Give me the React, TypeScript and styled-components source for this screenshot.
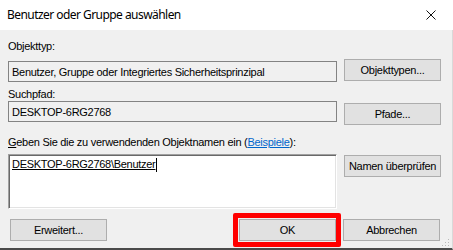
import * as React from "react";
import styled, { createGlobalStyle } from "styled-components";

const GlobalStyle = createGlobalStyle`
  html, body {
    margin: 0;
    padding: 0;
    background: #ffffff;
  }
`;

export default function App() {
  return (
    <>
      <GlobalStyle />
      <Window>
        <TitleBar>
          <Title>Benutzer oder Gruppe auswählen</Title>
          <CloseButton aria-label="Schließen">
            <svg width="10" height="10" viewBox="0 0 10 10">
              <path d="M0.5 0.5 L9.5 9.5 M9.5 0.5 L0.5 9.5" stroke="#111" strokeWidth="1" fill="none" />
            </svg>
          </CloseButton>
        </TitleBar>

        <Body>
          <Section $top={10}>
            <Label $gap={6}>Objekttyp:</Label>
            <Row>
              <ReadOnlyField $offset={2}>Benutzer, Gruppe oder Integriertes Sicherheitsprinzipal</ReadOnlyField>
              <Button $offset={0}>Objekttypen...</Button>
            </Row>
          </Section>

          <Section $top={6}>
            <Label $gap={0}>Suchpfad:</Label>
            <Row>
              <ReadOnlyField $offset={0}>DESKTOP-6RG2768</ReadOnlyField>
              <Button $offset={2}>Pfade...</Button>
            </Row>
          </Section>

          <Section $top={11}>
            <Label $gap={5}>
              <u>G</u>eben Sie die zu verwendenden Objektnamen ein (<Link href="#">Beispiele</Link>):
            </Label>
            <Row>
              <NameBox>
                <Resolved>DESKTOP-6RG2768\Benutzer</Resolved>
                <Caret />
              </NameBox>
              <Button $offset={1}>Namen überprüfen</Button>
            </Row>
          </Section>

          <Footer>
            <Button $offset={0} $indent={2}>Erweitert...</Button>
            <FooterRight>
              <Highlight>
                <Button $offset={0}>OK</Button>
              </Highlight>
              <Button $offset={0}>Abbrechen</Button>
            </FooterRight>
          </Footer>

          <Grip width="8" height="8" viewBox="0 0 8 8">
            <rect x="6" y="0" width="1" height="1" fill="#b8b8b8" />
            <rect x="3" y="3" width="1" height="1" fill="#b8b8b8" />
            <rect x="6" y="3" width="1" height="1" fill="#b8b8b8" />
            <rect x="0" y="6" width="1" height="1" fill="#b8b8b8" />
            <rect x="3" y="6" width="1" height="1" fill="#b8b8b8" />
            <rect x="6" y="6" width="1" height="1" fill="#b8b8b8" />
          </Grip>
        </Body>
      </Window>
    </>
  );
}

const Window = styled.div`
  width: 453px;
  height: 250px;
  display: flex;
  flex-direction: column;
  overflow: hidden;
  font-family: "Liberation Sans", Arial, sans-serif;
  font-size: 11px;
  letter-spacing: -0.28px;
  color: #000;
`;

const TitleBar = styled.div`
  height: 30px;
  flex: none;
  display: flex;
  align-items: center;
  justify-content: space-between;
  padding-left: 7px;
  background: #ffffff;
`;

const Title = styled.span`
  font-family: "Noto Sans", "Open Sans", sans-serif;
  font-size: 12px;
  letter-spacing: -0.55px;
  line-height: 16px;
  margin-top: -1px;
  color: #000;
`;

const CloseButton = styled.div`
  width: 46px;
  height: 30px;
  display: flex;
  align-items: center;
  justify-content: center;
  margin-right: -1px;
  padding-left: 2px;
`;

const Body = styled.div`
  position: relative;
  flex: 1;
  background: #f0f0f0;
  padding: 0 12px 0 8px;
  border-bottom: 2px solid #4a4a4a;
  border-right: 1px solid #d9d9d9;
`;

const Section = styled.div<{ $top: number }>`
  margin-top: ${(p) => p.$top}px;
`;

const Label = styled.div<{ $gap: number }>`
  line-height: 13px;
  height: 13px;
  margin-bottom: ${(p) => p.$gap}px;
  white-space: nowrap;
`;

const Link = styled.a`
  color: #0066cc;
  text-decoration: underline;
`;

const Row = styled.div`
  display: grid;
  grid-template-columns: 329px 97px;
  column-gap: 7px;
  align-items: start;
`;

const ReadOnlyField = styled.div<{ $offset: number }>`
  box-sizing: border-box;
  height: 21px;
  margin-top: ${(p) => p.$offset}px;
  border: 1px solid #838383;
  background: #f0f0f0;
  padding-left: 3px;
  display: flex;
  align-items: center;
  white-space: nowrap;
  overflow: hidden;
`;

const NameBox = styled.div`
  box-sizing: border-box;
  height: 55px;
  background: #ffffff;
  border: 1px solid;
  border-color: #a0a0a0 #ffffff #ffffff #a0a0a0;
  box-shadow: inset 1px 1px 0 #696969, inset -1px -1px 0 #e3e3e3;
  padding: 3px 0 0 3px;
  display: flex;
  align-items: flex-start;
  line-height: 13px;
`;

const Resolved = styled.span`
  text-decoration: underline;
  white-space: nowrap;
`;

const Caret = styled.span`
  display: inline-block;
  width: 1px;
  height: 14px;
  margin-left: 1px;
  background: #000;
`;

const Button = styled.div<{ $offset: number; $indent?: number }>`
  box-sizing: border-box;
  width: 97px;
  height: 22px;
  margin-top: ${(p) => p.$offset}px;
  margin-left: ${(p) => p.$indent ?? 0}px;
  background: #e1e1e1;
  border: 1px solid #adadad;
  display: flex;
  align-items: center;
  justify-content: center;
  white-space: nowrap;
`;

const Footer = styled.div`
  margin-top: 10px;
  display: flex;
  justify-content: space-between;
  align-items: flex-start;
`;

const FooterRight = styled.div`
  display: flex;
  gap: 7px;
`;

const Highlight = styled.div`
  position: relative;
  &::after {
    content: "";
    position: absolute;
    left: -6px;
    top: -6px;
    right: -5px;
    bottom: -6px;
    border: 5px solid #ff0000;
    border-radius: 2px;
    pointer-events: none;
  }
`;

const Grip = styled.svg`
  position: absolute;
  right: 2px;
  bottom: 1px;
`;
